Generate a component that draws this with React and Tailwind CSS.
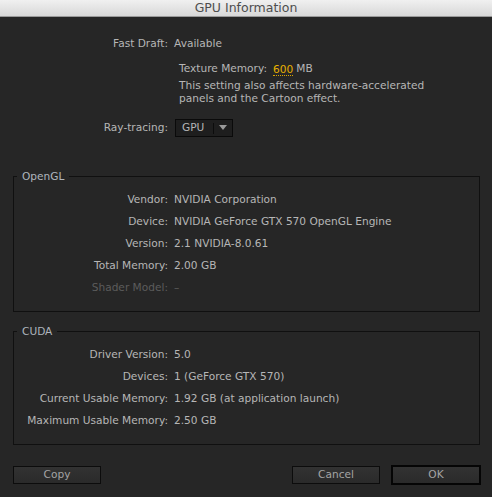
import React from 'react';

const font = { fontFamily: '"DejaVu Sans", Verdana, sans-serif' };

const Row = ({ label, value, dim }) => (
    <div className={`flex h-[22px] items-center ${dim ? 'text-[#5c5c5c]' : 'text-[#b6b6b6]'}`}>
        <div className="w-[154px] text-right">{label}</div>
        <div className="ml-[6px]">{value}</div>
    </div>
);

const Group = ({ title, children, className }) => (
    <fieldset className={`ml-[13px] mr-[12px] border border-[#101010] pl-0 pr-0 ${className}`}>
        <legend className="ml-[3px] px-[5px] leading-[14px] text-[#aeb5bd]">{title}</legend>
        {children}
    </fieldset>
);

const Button = ({ children, primary, className }) => (
    <button
        className={`flex items-center justify-center bg-gradient-to-b from-[#323232] to-[#2a2a2a] text-[#a4a4a4] ${
            primary ? 'h-[20px] w-[90px] border-2 border-[#050505]' : 'h-[18px] w-[88px] border border-[#0c0c0c]'
        } ${className || ''}`}
    >
        {children}
    </button>
);

export default function App() {
    return (
        <div className="h-[497px] w-[492px] overflow-hidden bg-[#262626] text-[10.6px]" style={font}>
            <div className="flex h-[17px] items-center justify-center border-b border-[#9a9a9a] bg-gradient-to-b from-[#f0f0f0] to-[#d8d8d8] text-[12.5px] text-[#4e4e4e]">
                GPU Information
            </div>

            <div className="mt-[16px] flex h-[22px] items-center text-[#b6b6b6]">
                <div className="w-[168px] text-right">Fast Draft:</div>
                <div className="ml-[6px]">Available</div>
            </div>

            <div className="ml-[179px] mt-[7px] text-[#b6b6b6]">
                <div className="flex h-[17px] items-center pb-[3px]">
                    Texture Memory:
                    <span className="ml-[6px] border-b border-dotted border-[#d9a400] leading-[12px] text-[#e6b000]">600</span>
                    <span className="ml-[3px]">MB</span>
                </div>
                <div className="leading-[13px]">
                    This setting also affects hardware-accelerated
                    <br />
                    panels and the Cartoon effect.
                </div>
            </div>

            <div className="mt-[14px] flex items-center text-[#b6b6b6]">
                <div className="w-[168px] text-right">Ray-tracing:</div>
                <div className="ml-[7px] flex h-[18px] w-[58px] items-center border border-[#0a0a0a] bg-[#1e1e1e]">
                    <span className="ml-[6px] w-[31px]">GPU</span>
                    <span className="h-[11px] w-px bg-[#0c0c0c]" />
                    <svg width="8" height="6" viewBox="0 0 8 6" className="ml-[5px]">
                        <path d="M0 0 H8 L4 5 Z" fill="#9a9a9a" />
                    </svg>
                </div>
            </div>

            <Group title="OpenGL" className="mt-[32px] pb-[12px] pt-[6px]">
                <Row label="Vendor:" value="NVIDIA Corporation" />
                <Row label="Device:" value="NVIDIA GeForce GTX 570 OpenGL Engine" />
                <Row label="Version:" value="2.1 NVIDIA-8.0.61" />
                <Row label="Total Memory:" value="2.00 GB" />
                <Row label="Shader Model:" value="–" dim />
            </Group>

            <Group title="CUDA" className="mt-[12px] pb-[12px] pt-[6px]">
                <Row label="Driver Version:" value="5.0" />
                <Row label="Devices:" value="1 (GeForce GTX 570)" />
                <Row label="Current Usable Memory:" value="1.92 GB (at application launch)" />
                <Row label="Maximum Usable Memory:" value="2.50 GB" />
            </Group>

            <div className="ml-[13px] mr-[11px] mt-[20px] flex items-center">
                <Button>Copy</Button>
                <div className="flex-1" />
                <Button>Cancel</Button>
                <Button primary className="ml-[11px]">OK</Button>
            </div>
        </div>
    );
}
